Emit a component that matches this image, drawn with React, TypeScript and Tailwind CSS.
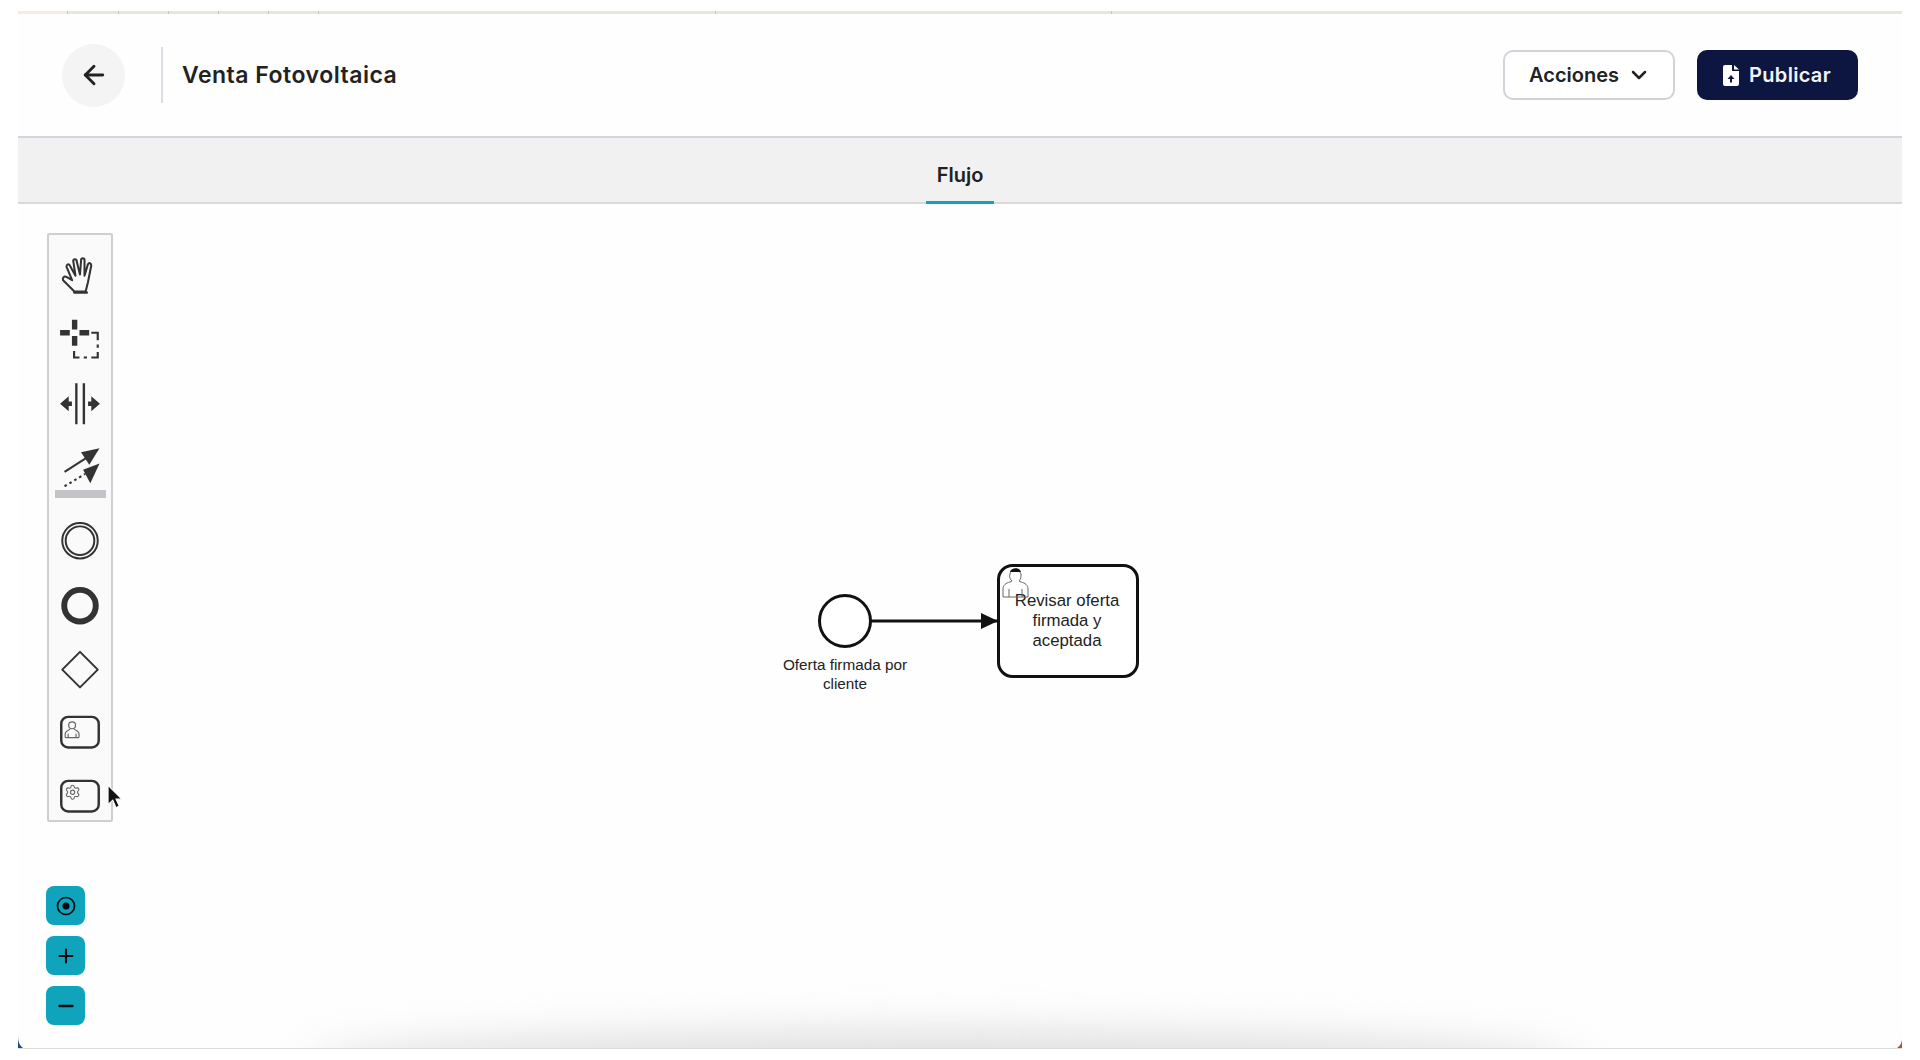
import { ArrowLeft, ChevronDown, Minus, Plus, Settings } from "lucide-react";

const ticks = [51, 50, 50, 50, 50, 397, 396, 395];

const Palette = () => (
  <div className="w-[66px] h-[589px] bg-[#fafafa] border-2 border-[#cfcfcf] rounded-[2px] flex flex-col items-center pt-[17px] text-[#333]">
    <svg width="48" height="48" viewBox="3 3 42 42" fill="none" stroke="currentColor" strokeWidth="1.800" strokeLinejoin="round" strokeLinecap="round">
      <path d="M19 38l-10-10c-1-2 1-4 3-3l5 3-5-12c0-2 2-3 3-1l5 9-2-13c0-2 3-2 3 0l3 12 1-13c0-2 3-2 3 0l0 14 3-10c1-2 3-1 3 1l-3 15-2 8z" />
      <path d="M19 39h11" strokeWidth="2.200" />
    </svg>
    <svg className="mt-4" width="48" height="48" viewBox="2.500 2.500 44 44">
      <path d="M17 7h5v9h-5zM17 22h5v9h-5zM6 16.500h9v5H6zM24 16.500h9v5h-9z" fill="currentColor" />
      <path d="M35 19h6v7M41 30v3M41 37v5h-6M31 42h-3M24 42h-5v-6" fill="none" stroke="currentColor" strokeWidth="2" />
    </svg>
    <svg className="mt-4" width="48" height="48" viewBox="2.500 1 44 44" fill="currentColor">
      <path d="M20 5h2.200v38H20zM27 5h2.200v38H27z" />
      <path d="M6 24l8-7v5h3v4h-3v5zM43 24l-8-7v5h-3v4h3v5z" />
    </svg>
    <svg className="mt-4" width="48" height="48" viewBox="1 1 46 46">
      <path d="M9 30l22-14" stroke="currentColor" strokeWidth="2" />
      <path d="M43 7l-18 4 8 12z" fill="currentColor" />
      <path d="M9 44l20-12" stroke="currentColor" strokeWidth="2" strokeDasharray="2.500 3" />
      <path d="M43 22l-16 6 7 13z" fill="currentColor" />
    </svg>
    <div className="w-[51px] h-[8px] mt-[1px] bg-[#c4c4c8]"></div>
    <svg className="mt-[19px]" width="48" height="48" viewBox="0 0 48 48" fill="none" stroke="currentColor">
      <circle cx="24" cy="24" r="18" strokeWidth="2" />
      <circle cx="24" cy="24" r="14.500" strokeWidth="2" />
    </svg>
    <svg className="mt-[17px]" width="48" height="48" viewBox="0 0 48 48" fill="none" stroke="currentColor">
      <circle cx="24" cy="24" r="16" strokeWidth="6" />
    </svg>
    <svg className="mt-[17px]" width="48" height="48" viewBox="0 0 48 48" fill="none" stroke="currentColor">
      <path d="M24 6l18 18-18 18L6 24z" strokeWidth="2" strokeLinejoin="round" />
    </svg>
    <svg className="mt-[16px]" width="48" height="48" viewBox="0 0 48 48" fill="none" stroke="currentColor">
      <rect x="5" y="8" width="38" height="31" rx="7" strokeWidth="2.500" />
      <circle cx="16" cy="16.500" r="3.500" stroke="#666" strokeWidth="1.200" />
      <path d="M9 29v-4c0-2 2-3 5-4.500M23 29v-4c0-2-2-3-5-4.500M9 29h14M12 29v-4M20 29v-4" stroke="#666" strokeWidth="1.200" />
    </svg>
    <svg className="mt-[16px]" width="48" height="48" viewBox="0 0 48 48" fill="none" stroke="currentColor">
      <rect x="5" y="8" width="38" height="31" rx="7" strokeWidth="2.500" />
      <Settings x={8} y={11} width={17} height={17} color="#666" strokeWidth={1.600} />
    </svg>
  </div>
);

const ZoomButton = ({ children }: { children: React.ReactNode }) => (
  <button className="w-[39px] h-[39px] rounded-lg bg-[#0fa3bc] flex items-center justify-center text-[#0b0b0b]">
    {children}
  </button>
);

export default function App() {
  return (
    <div className="w-full h-[1060px] bg-white overflow-hidden pt-[11px] px-[18px] font-['Inter',sans-serif]">
      <div className="relative h-[1038px] bg-[#fefefe] border-b border-[#dcdcdc] overflow-hidden flex flex-col">
        <div className="flex h-[3px] shrink-0 bg-[#e9e5df]">
          <div className="w-[49px] bg-[#f7ece2]"></div>
          {ticks.map((w, i) => (
            <div key={i} className="border-l border-[#c9c5bf]" style={{ width: w }}></div>
          ))}
        </div>

        <header className="h-[124px] shrink-0 border-b-2 border-[#d4d4dc] flex items-center pl-[44px] pr-[44px]">
          <button className="w-[63px] h-[63px] rounded-full bg-[#f4f4f4] flex items-center justify-center text-[#222]">
            <ArrowLeft size={30} strokeWidth={2.300} />
          </button>
          <div className="w-[2px] h-[56px] bg-[#dcdce6] ml-[36px]"></div>
          <h1 className="ml-[19px] text-[23px] tracking-[0.5px] font-semibold text-[#222]">Venta Fotovoltaica</h1>
          <div className="ml-auto flex gap-[22px]">
            <button className="w-[172px] h-[50px] rounded-[10px] bg-white border-2 border-[#d2d2d8] flex items-center pl-[24px] gap-[8px] text-[20px] font-semibold text-[#222]">
              Acciones
              <ChevronDown size={24} strokeWidth={2.500} />
            </button>
            <button className="w-[161px] h-[50px] rounded-[10px] bg-[#0d1640] flex items-center justify-center gap-[10px] pr-[1px] text-[20px] tracking-[0.3px] font-semibold text-[#f4f4f8]">
              <svg width="16" height="21" viewBox="0 0 16 21">
                <path d="M2 0h7v6h7v13a2 2 0 0 1-2 2H2a2 2 0 0 1-2-2V2a2 2 0 0 1 2-2zM11 0l5 4.500h-5z" fill="#fff" />
                <path d="M8 10l-3.500 4H7v3.500h2V14h2.500z" fill="#0d1640" />
              </svg>
              Publicar
            </button>
          </div>
        </header>

        <nav className="h-[66px] shrink-0 bg-[#f1f1f1] border-b-2 border-[#d9d9d9] flex justify-center">
          <div className="w-[68px] h-[66px] border-b-[3px] border-[#0fa3bc] flex items-center justify-center pt-[11px] text-[20px] font-semibold text-[#222]">
            Flujo
          </div>
        </nav>

        <main className="relative flex-1 pt-[29px] pl-[29px]">
          <Palette />
          <div className="mt-[64px] -ml-[1px] flex flex-col gap-[11px]">
            <ZoomButton>
              <svg width="20" height="20" viewBox="0 0 20 20" fill="none" stroke="currentColor">
                <circle cx="10" cy="10" r="8.500" strokeWidth="1.700" />
                <circle cx="10" cy="10" r="3.500" fill="currentColor" stroke="none" />
              </svg>
            </ZoomButton>
            <ZoomButton>
              <Plus size={22} strokeWidth={2.300} />
            </ZoomButton>
            <ZoomButton>
              <Minus size={22} strokeWidth={2.800} />
            </ZoomButton>
          </div>

          {/* cursor */}
          <svg className="absolute left-[89px] top-[580px]" width="17" height="26" viewBox="0 0 16 24">
            <path d="M1 1v18l4.500-4 3 7 3-1.500-3-6.500H14z" fill="#111" stroke="#fff" strokeWidth="1" />
          </svg>

          {/* diagram */}
          <svg className="absolute left-[752px] top-[346px]" width="380" height="150" viewBox="0 0 380 150" fill="none">
            <circle cx="75" cy="71" r="25.500" fill="#fff" stroke="#111" strokeWidth="3" />
            <path d="M100 71h128" stroke="#111" strokeWidth="3" />
            <path d="M211 63l17 8-17 8z" fill="#111" />
            <rect x="228.500" y="15.500" width="139" height="111" rx="14" fill="#fff" stroke="#111" strokeWidth="3" />
            <g fontFamily="'Liberation Sans',Arial,sans-serif" fontSize="16.800" fill="#222" textAnchor="middle">
              <text x="297" y="56">Revisar oferta</text>
              <text x="297" y="76">firmada y</text>
              <text x="297" y="96">aceptada</text>
            </g>
            <g fontFamily="'Liberation Sans',Arial,sans-serif" fontSize="15.300" fill="#222" textAnchor="middle">
              <text x="75" y="119.500">Oferta firmada por</text>
              <text x="75" y="138.500">cliente</text>
            </g>
            <path d="M233 47v-8c0-4 3-6 7-7l2-1c-2-2-3-4-2-7 0-3 3-4 5-4 3 0 5 1 6 4 0 3 0 5-2 7l2 1c4 1 7 3 7 7v8" stroke="#666" strokeWidth="1" />
            <path d="M240 22c1-5 10-5 11 0z" fill="#111" />
            <path d="M233 47h25M239 47v-8M252 47v-8" stroke="#666" strokeWidth="1" />
          </svg>

          {/* shadow from the dock below */}
          <div className="absolute left-[290px] w-[1270px] -bottom-[55px] h-[70px] rounded-[50%] bg-[#dcdcdc] blur-[22px]"></div>
        </main>

        <svg className="absolute left-0 bottom-0" width="5" height="13" viewBox="0 0 5 13">
          <path d="M0 0c0 6 1 10 5 13H0z" fill="#1a4a86" />
        </svg>
        <svg className="absolute right-0 bottom-0" width="5" height="9" viewBox="0 0 5 9">
          <path d="M5 0c0 4-2 7-5 9h5z" fill="#b8502a" />
        </svg>
      </div>
    </div>
  );
}
